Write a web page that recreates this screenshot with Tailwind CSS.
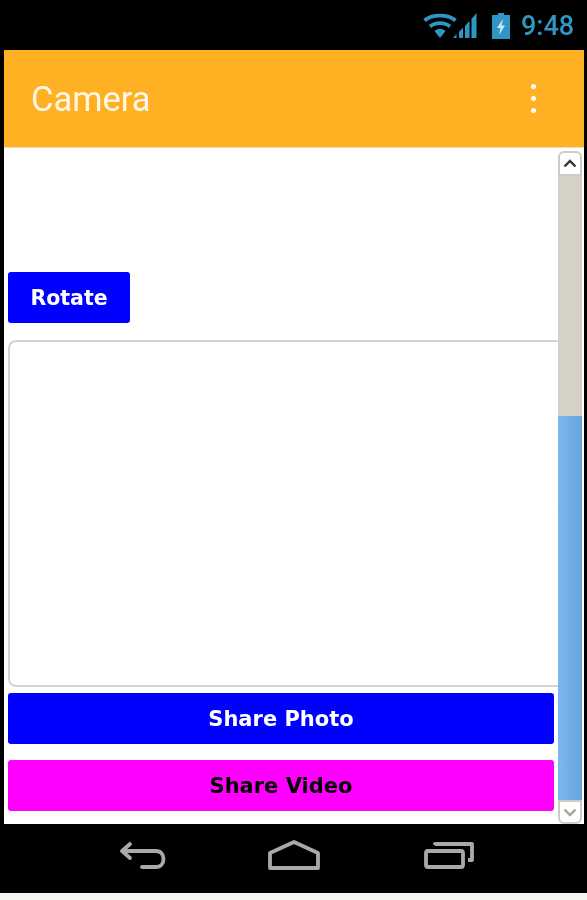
<!DOCTYPE html>
<html lang="en">
<head>
  <meta charset="UTF-8" />
  <title>Camera</title>
  <script src="https://cdn.jsdelivr.net/npm/@tailwindcss/browser@4"></script>
</head>
<body class="bg-black h-[900px] w-[587px] overflow-hidden flex flex-col blur-[0.5px]">

  <!-- Status bar -->
  <div class="h-[50px] flex items-start pl-[423px] pt-[13px] text-[#2f97c4]">
    <svg width="57" height="26" viewBox="0 0 57 26">
      <g fill="none" stroke="#2f97c4" stroke-width="3.800">
        <path d="M1.500 7.500 C9 1 25 1 32.500 7.500" />
        <path d="M7 13.500 C12 9 22 9 27 13.500" />
      </g>
      <path d="M11.500 18 C15 15 19 15 22.500 18 L17 25 Z" fill="#2f97c4" />
      <path d="M30 25 h3.500 v-4 l-3.500 4 Z M36 25 h4 v-10.500 l-4 4.500 Z M42 25 h4.500 v-17 l-4.500 5 Z M48.500 25 h5 v-25 l-5 6 Z" fill="#2f97c4" />
    </svg>
    <svg width="18" height="26" viewBox="0 0 18 26" class="ml-[12px]">
      <path d="M6 0 h6 v2 h6 v24 h-18 v-24 h6 Z" fill="#2f97c4" />
      <path d="M11 6 L5 15 h3.500 l-1.500 7 L13 12.500 h-3.500 Z" fill="#cfe8f3" />
    </svg>
    <span class="font-['Roboto',sans-serif] font-medium text-[27px] leading-none ml-[11px]">9:48</span>
  </div>

  <!-- Screen -->
  <div class="ml-1 w-[580px] h-[774px] flex flex-col bg-white">
    <header class="h-[98px] bg-[#ffb023] flex items-center justify-between pl-[27px] pr-[48px] shrink-0 border-b border-[#e8dcc4]">
      <h1 class="font-['Roboto',sans-serif] text-[34.500px] text-[#fff8ea] pt-[2px]">Camera</h1>
      <div class="flex flex-col gap-[7px]">
        <span class="size-[5px] rounded-full bg-white"></span>
        <span class="size-[5px] rounded-full bg-white"></span>
        <span class="size-[5px] rounded-full bg-white"></span>
      </div>
    </header>

    <div class="flex-1 flex min-h-0">
      <!-- Page content -->
      <main class="flex-1 min-w-0 flex flex-col pl-1 pt-[124px]">
        <button class="w-[122px] h-[51px] pt-[2px] bg-[#0000ff] text-white rounded-[3px] font-['DejaVu_Sans',sans-serif] font-bold text-[20.500px]">Rotate</button>
        <div class="mt-[17px] h-[347px] border-2 border-r-0 border-[#d4d4d0] rounded-l-[8px] bg-white"></div>
        <button class="mt-[6px] w-[546px] h-[51px] pt-[2px] bg-[#0000ff] text-white rounded-[3px] font-['DejaVu_Sans',sans-serif] font-bold text-[21px]">Share Photo</button>
        <button class="mt-[16px] w-[546px] h-[51px] pt-[2px] bg-[#ff00ff] text-black rounded-[3px] font-['DejaVu_Sans',sans-serif] font-bold text-[21px]">Share Video</button>
      </main>

      <!-- Scrollbar -->
      <div class="w-[24px] pt-[3px] flex flex-col shrink-0 mr-[2px]">
        <div class="h-[25px] bg-white border-2 border-[#cfcbc2] rounded-t-[6px] flex items-center justify-center">
          <svg width="14" height="9" viewBox="0 0 14 9"><path d="M1.500 7.500 L7 2 L12.500 7.500" fill="none" stroke="#333" stroke-width="2.400" /></svg>
        </div>
        <div class="h-[240px] bg-[#d6d1c7]"></div>
        <div class="flex-1 bg-linear-to-r from-[#7db7ef] to-[#66a5de]"></div>
        <div class="h-[24px] bg-white border-2 border-[#cfcbc2] rounded-b-[6px] flex items-center justify-center">
          <svg width="14" height="9" viewBox="0 0 14 9"><path d="M1.500 1.500 L7 7 L12.500 1.500" fill="none" stroke="#a8a49c" stroke-width="2.400" /></svg>
        </div>
      </div>
    </div>
  </div>

  <!-- Navigation bar -->
  <nav class="h-[69px] flex items-center pl-[119px] pb-[8px] shrink-0">
    <svg width="48" height="28" viewBox="0 0 48 28" fill="none" stroke="#a9a9a9" stroke-width="3.800" stroke-linejoin="round" stroke-linecap="round">
      <path d="M11 3 L3 10 L11 17 M3 10 H37 C47 10 47 26 37 26 H23" />
    </svg>
    <svg width="52" height="30" viewBox="0 0 52 30" fill="none" stroke="#a9a9a9" stroke-width="3.800" stroke-linejoin="round" class="ml-[101px]">
      <path d="M2 13 L26 2 L50 13 V28 H2 Z" />
    </svg>
    <svg width="50" height="28" viewBox="0 0 50 28" fill="none" stroke="#a9a9a9" stroke-width="3.800" stroke-linejoin="round" class="ml-[104px]">
      <rect x="2" y="10" width="37" height="16" rx="2" />
      <path d="M11 4 V3 H48 V19 H44" />
    </svg>
  </nav>
  <div class="flex-1 bg-[#f6f6f0]"></div>
</body>
</html>
